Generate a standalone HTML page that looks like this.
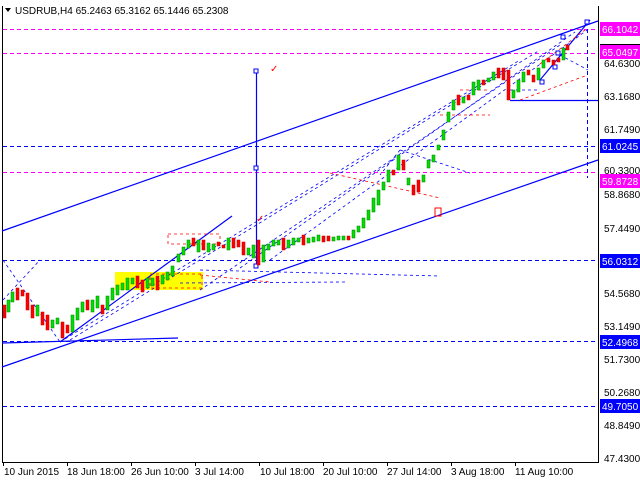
<!DOCTYPE html>
<html><head><meta charset="utf-8"><style>
html,body{margin:0;padding:0;background:#fff;width:640px;height:480px;overflow:hidden}
svg{display:block}
text{font-family:"Liberation Sans",sans-serif;font-size:10px}
</style></head><body>
<svg width="640" height="480" viewBox="0 0 640 480" xmlns="http://www.w3.org/2000/svg">
<rect width="640" height="480" fill="#fff"/>
<!-- frame -->
<line x1="2.5" y1="6" x2="2.5" y2="462" stroke="#000"/>
<line x1="598.5" y1="6" x2="598.5" y2="462" stroke="#000"/>
<line x1="2" y1="462.5" x2="599" y2="462.5" stroke="#000"/>
<!-- yellow box -->
<rect x="115" y="272" width="88" height="18" fill="#ffff00"/>
<!-- horizontal levels -->
<g stroke-dasharray="4,3" stroke-width="1">
<line x1="3" y1="29.5" x2="598" y2="29.5" stroke="#ff00ff"/>
<line x1="3" y1="53.5" x2="598" y2="53.5" stroke="#ff00ff"/>
<line x1="3" y1="172.5" x2="598" y2="172.5" stroke="#ff00ff"/>
<line x1="3" y1="146.5" x2="598" y2="146.5" stroke="#0000ff"/>
<line x1="3" y1="260.5" x2="598" y2="260.5" stroke="#0000ff"/>
<line x1="3" y1="341.5" x2="598" y2="341.5" stroke="#0000ff"/>
<line x1="3" y1="406.5" x2="598" y2="406.5" stroke="#0000ff"/>
<line x1="587.5" y1="29" x2="587.5" y2="178" stroke="#0000ff"/>
</g>
<!-- channel lines -->
<g stroke="#0000ff" stroke-width="1.2" fill="none">
<line x1="2" y1="231" x2="598" y2="21"/>
<line x1="2" y1="367" x2="598" y2="160"/>
<line x1="510" y1="100.5" x2="598" y2="100.5"/>
<line x1="256.5" y1="71" x2="256.5" y2="268"/>
<line x1="2" y1="343" x2="178" y2="338"/>
<line x1="60" y1="342" x2="232" y2="216"/>
<line x1="540" y1="80" x2="590" y2="20"/>
</g>
<!-- dashed fans -->
<g stroke="#0000ff" stroke-width="0.8" stroke-dasharray="3,3" fill="none">
<line x1="60" y1="342" x2="520" y2="60"/>
<line x1="70" y1="340" x2="540" y2="50"/>
<line x1="200" y1="290" x2="560" y2="45"/>
<line x1="240" y1="268" x2="575" y2="32"/>
<line x1="270" y1="260" x2="590" y2="28"/>
<line x1="3" y1="260" x2="60" y2="342"/>
<line x1="3" y1="300" x2="40" y2="260"/>
<line x1="200" y1="270" x2="440" y2="276"/>
<line x1="180" y1="283" x2="345" y2="282"/>
<line x1="400" y1="150" x2="470" y2="173"/>
<line x1="400" y1="150" x2="380" y2="175"/>
<line x1="560" y1="55" x2="588" y2="70"/>
<line x1="510" y1="90" x2="540" y2="90"/>
</g>
<g stroke="#ff0000" stroke-width="0.8" stroke-dasharray="3,3" fill="none">
<rect x="168" y="234" width="52" height="10"/>
<rect x="150" y="274" width="52" height="14"/>
<line x1="200" y1="275" x2="270" y2="282"/>
<line x1="330" y1="173" x2="440" y2="198"/>
<line x1="460" y1="90" x2="490" y2="90"/>
<line x1="440" y1="115" x2="490" y2="115"/>
<line x1="520" y1="100" x2="585" y2="76"/>
<line x1="540" y1="64" x2="585" y2="30"/>
</g>
<!-- red checks -->
<text x="270" y="72" fill="#ff0000" font-size="14">✓</text>
<text x="256" y="222" fill="#ff0000" font-size="14">✓</text>
<rect x="435" y="208" width="6" height="8" fill="none" stroke="#ff0000"/>
<!-- markers -->
<g fill="#fff" stroke="#0000ff">
<rect x="254" y="69" width="4" height="4"/><rect x="254" y="166" width="4" height="4"/><rect x="254" y="264" width="4" height="4"/>
<rect x="585" y="20" width="4" height="4"/><rect x="561" y="35" width="4" height="4"/><rect x="556" y="51" width="4" height="4"/><rect x="540" y="80" width="4" height="4"/><rect x="553" y="65" width="4" height="4"/>
</g>
<!-- candles -->
<g id="c">
<g fill="#00e000" stroke="#008000" stroke-width="0.5">
<rect x="7" y="300" width="3" height="12"/><rect x="11" y="292" width="3" height="10"/><rect x="36" y="305" width="3" height="11"/><rect x="51" y="320" width="3" height="8"/><rect x="56" y="318" width="3" height="6"/><rect x="71" y="315" width="3" height="17"/><rect x="76" y="308" width="3" height="12"/><rect x="81" y="302" width="3" height="10"/><rect x="91" y="300" width="3" height="12"/><rect x="96" y="296" width="3" height="12"/><rect x="106" y="296" width="3" height="14"/><rect x="111" y="288" width="3" height="12"/><rect x="116" y="285" width="3" height="10"/><rect x="121" y="283" width="3" height="7"/><rect x="126" y="278" width="3" height="12"/><rect x="131" y="278" width="3" height="6"/><rect x="146" y="278" width="3" height="10"/><rect x="151" y="278" width="3" height="8"/><rect x="161" y="275" width="3" height="9"/><rect x="166" y="272" width="3" height="8"/><rect x="171" y="266" width="3" height="10"/><rect x="177" y="254" width="3" height="8"/><rect x="182" y="247" width="3" height="8"/><rect x="187" y="240" width="3" height="8"/><rect x="197" y="240" width="3" height="12"/><rect x="207" y="243" width="3" height="9"/><rect x="212" y="244" width="3" height="6"/><rect x="227" y="238" width="3" height="12"/><rect x="247" y="248" width="3" height="7"/><rect x="252" y="245" width="3" height="13"/><rect x="262" y="245" width="3" height="17"/><rect x="267" y="244" width="3" height="6"/><rect x="272" y="240" width="3" height="6"/><rect x="277" y="240" width="3" height="5"/><rect x="287" y="240" width="3" height="8"/><rect x="292" y="238" width="3" height="7"/><rect x="297" y="238" width="3" height="4"/><rect x="307" y="238" width="3" height="5"/><rect x="312" y="237" width="3" height="5"/><rect x="317" y="235" width="3" height="6"/><rect x="332" y="237" width="3" height="4"/><rect x="337" y="236" width="3" height="4"/><rect x="342" y="236" width="3" height="4"/><rect x="352" y="230" width="3" height="8"/><rect x="357" y="226" width="3" height="6"/><rect x="362" y="218" width="3" height="10"/><rect x="367" y="210" width="3" height="10"/><rect x="372" y="198" width="3" height="14"/><rect x="377" y="190" width="3" height="15"/><rect x="382" y="182" width="3" height="8"/><rect x="387" y="170" width="3" height="12"/><rect x="397" y="155" width="3" height="15"/><rect x="407" y="178" width="3" height="7"/><rect x="422" y="175" width="3" height="7"/><rect x="427" y="160" width="3" height="8"/><rect x="432" y="155" width="3" height="7"/><rect x="437" y="145" width="3" height="5"/><rect x="442" y="130" width="3" height="10"/><rect x="447" y="112" width="3" height="10"/><rect x="452" y="100" width="3" height="10"/><rect x="462" y="97" width="3" height="6"/><rect x="472" y="82" width="3" height="13"/><rect x="477" y="80" width="3" height="10"/><rect x="487" y="78" width="3" height="4"/><rect x="492" y="72" width="3" height="8"/><rect x="512" y="90" width="3" height="8"/><rect x="517" y="80" width="3" height="12"/><rect x="522" y="72" width="3" height="10"/><rect x="537" y="68" width="3" height="12"/><rect x="542" y="60" width="3" height="8"/><rect x="562" y="48" width="3" height="12"/>
</g>
<g fill="#ff0000" stroke="#c00000" stroke-width="0.5">
<rect x="3" y="305" width="3" height="13"/><rect x="16" y="288" width="3" height="12"/><rect x="21" y="290" width="3" height="6"/><rect x="26" y="293" width="3" height="17"/><rect x="31" y="305" width="3" height="13"/><rect x="41" y="312" width="3" height="13"/><rect x="46" y="315" width="3" height="15"/><rect x="61" y="322" width="3" height="16"/><rect x="66" y="325" width="3" height="8"/><rect x="86" y="300" width="3" height="10"/><rect x="101" y="305" width="3" height="9"/><rect x="136" y="276" width="3" height="12"/><rect x="141" y="280" width="3" height="12"/><rect x="156" y="276" width="3" height="14"/><rect x="192" y="238" width="3" height="8"/><rect x="202" y="240" width="3" height="10"/><rect x="217" y="242" width="3" height="4"/><rect x="222" y="245" width="3" height="3"/><rect x="232" y="238" width="3" height="10"/><rect x="237" y="240" width="3" height="7"/><rect x="242" y="242" width="3" height="13"/><rect x="257" y="240" width="3" height="25"/><rect x="282" y="238" width="3" height="12"/><rect x="302" y="235" width="3" height="10"/><rect x="322" y="236" width="3" height="6"/><rect x="327" y="236" width="3" height="5"/><rect x="347" y="236" width="3" height="4"/><rect x="392" y="170" width="3" height="5"/><rect x="402" y="160" width="3" height="10"/><rect x="412" y="185" width="3" height="10"/><rect x="417" y="180" width="3" height="12"/><rect x="457" y="95" width="3" height="10"/><rect x="467" y="95" width="3" height="5"/><rect x="482" y="80" width="3" height="5"/><rect x="497" y="68" width="3" height="10"/><rect x="502" y="68" width="3" height="12"/><rect x="507" y="70" width="3" height="30"/><rect x="527" y="70" width="3" height="5"/><rect x="532" y="75" width="3" height="7"/><rect x="547" y="58" width="3" height="4"/><rect x="552" y="60" width="3" height="5"/><rect x="557" y="58" width="3" height="4"/><rect x="566" y="45" width="3" height="5"/>
</g>
</g>
<!-- header -->
<path d="M5 8 L11 8 L8 12 Z" fill="#000"/>
<text x="15" y="14" fill="#000">USDRUB,H4  65.2463 65.3162 65.1446 65.2308</text>
<!-- right axis -->
<g fill="#000">
<text x="604" y="67">64.6300</text>
<text x="604" y="100">63.1680</text>
<text x="604" y="133">61.7490</text>
<text x="604" y="174">60.3300</text>
<text x="604" y="198">58.8680</text>
<text x="604" y="232">57.4490</text>
<text x="604" y="297">54.5680</text>
<text x="604" y="330">53.1490</text>
<text x="604" y="363">51.7300</text>
<text x="604" y="396">50.2680</text>
<text x="604" y="429">48.8490</text>
<text x="604" y="462">47.4300</text>
</g>
<rect x="600" y="44" width="40" height="9" fill="#000"/>
<rect x="600" y="22" width="40" height="14" fill="#ff00ff"/><text x="602" y="33" fill="#fff">66.1042</text>
<rect x="600" y="45" width="40" height="14" fill="#ff00ff"/><text x="602" y="56" fill="#fff">65.0497</text>
<rect x="600" y="139" width="40" height="14" fill="#0000ff"/><text x="602" y="150" fill="#fff">61.0245</text>
<rect x="600" y="174" width="40" height="14" fill="#ff00ff"/><text x="602" y="185" fill="#fff">59.8728</text>
<rect x="600" y="254" width="40" height="14" fill="#0000ff"/><text x="602" y="265" fill="#fff">56.0312</text>
<rect x="600" y="335" width="40" height="14" fill="#0000ff"/><text x="602" y="346" fill="#fff">52.4968</text>
<rect x="600" y="399" width="40" height="14" fill="#0000ff"/><text x="602" y="410" fill="#fff">49.7050</text>
<!-- dates -->
<g fill="#000">
<text x="4" y="475">10 Jun 2015</text>
<text x="67" y="475">18 Jun 18:00</text>
<text x="131" y="475">26 Jun 10:00</text>
<text x="195" y="475">3 Jul 14:00</text>
<text x="260" y="475">10 Jul 18:00</text>
<text x="323" y="475">20 Jul 10:00</text>
<text x="387" y="475">27 Jul 14:00</text>
<text x="451" y="475">3 Aug 18:00</text>
<text x="515" y="475">11 Aug 10:00</text>
</g>
<g stroke="#000"><line x1="3.5" y1="462" x2="3.5" y2="466"/><line x1="67.5" y1="462" x2="67.5" y2="466"/><line x1="131.5" y1="462" x2="131.5" y2="466"/><line x1="195.5" y1="462" x2="195.5" y2="466"/><line x1="259.5" y1="462" x2="259.5" y2="466"/><line x1="323.5" y1="462" x2="323.5" y2="466"/><line x1="387.5" y1="462" x2="387.5" y2="466"/><line x1="451.5" y1="462" x2="451.5" y2="466"/><line x1="515.5" y1="462" x2="515.5" y2="466"/></g>
</svg>
</body></html>
